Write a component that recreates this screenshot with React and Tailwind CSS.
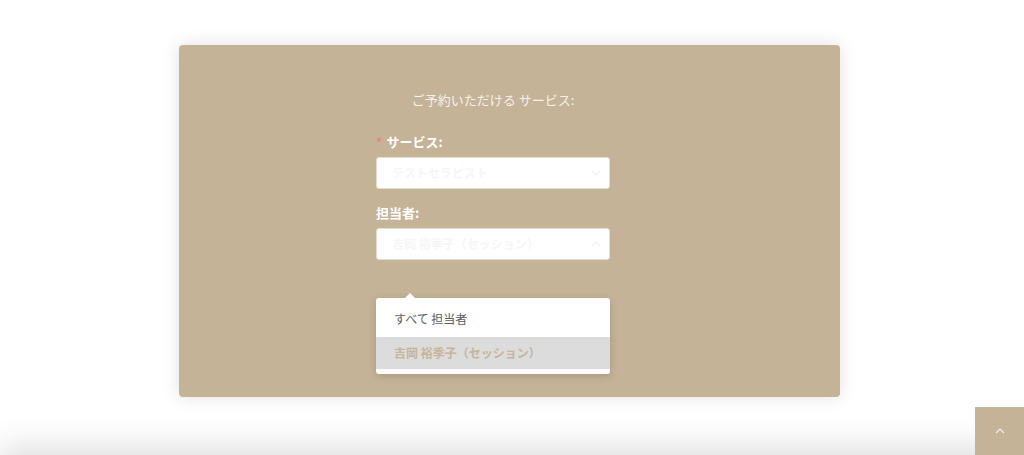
import React from "react";

const font = { fontFamily: '"Noto Sans CJK JP", "Noto Sans", sans-serif' };

function Chevron({ up }) {
  return (
    <svg width="10" height="6" viewBox="0 0 10 6" className="text-[#f0f0f0]">
      <path d={up ? "M1 5 L5 1 L9 5" : "M1 1 L5 5 L9 1"} fill="none" stroke="currentColor" strokeWidth="1.2" />
    </svg>
  );
}

export default function App() {
  return (
    <div className="relative w-[1024px] h-[455px] overflow-hidden bg-white" style={font}>
      <div className="pt-[45px] pl-[179px]">
        <div className="w-[661px] h-[352px] rounded-[4px] bg-[#c4b397] shadow-[0_0_18px_rgba(0,0,0,0.12)] pt-[45px] pl-[197px]">
          <div className="w-[234px]">
            <div className="text-center text-[13px] leading-[20px] text-[#f6f2ea]">ご予約いただける サービス:</div>
            <div className="mt-[23px] text-[13px] leading-[18px] font-bold text-white">
              <span className="text-[#e8838a] mr-[4px]">*</span>サービス:
            </div>
            <div className="mt-[6px] h-[32px] bg-white rounded-[3px] border border-[#e4ddcf] flex items-center justify-between pl-[15px] pr-[8px]">
              <span className="text-[12px] text-[#f6f6f6] font-bold">テストセラピスト</span>
              <Chevron />
            </div>
            <div className="mt-[15px] text-[13px] leading-[18px] font-bold text-white">担当者:</div>
            <div className="mt-[6px] h-[32px] bg-white rounded-[3px] border border-[#e4ddcf] flex items-center justify-between pl-[15px] pr-[8px]">
              <span className="text-[12px] text-[#f6f6f6] font-bold">吉岡 裕季子（セッション）</span>
              <Chevron up />
            </div>
            <div className="relative mt-[38px] bg-white rounded-[3px] shadow-[0_2px_8px_rgba(0,0,0,0.15)] pb-[5px]">
              <div className="absolute -top-[5px] left-[29px] w-0 h-0 border-l-[5px] border-r-[5px] border-b-[5px] border-l-transparent border-r-transparent border-b-white" />
              <div className="h-[39px] flex items-center pl-[18px] pt-[3px] text-[12px] text-[#5a5e66]">すべて 担当者</div>
              <div className="h-[32px] flex items-center pl-[18px] bg-[#dcdcdc] text-[12px] font-bold text-[#c6b597]">吉岡 裕季子（セッション）</div>
            </div>
          </div>
        </div>
      </div>
      <div className="absolute left-0 right-0 top-[455px] h-[40px] shadow-[0_-10px_30px_rgba(0,0,0,0.12)] bg-white" />
      <div className="absolute left-[975px] top-[407px] w-[49px] h-[48px] bg-[#c4b397] flex items-center justify-center">
        <svg width="10" height="6" viewBox="0 0 10 6">
          <path d="M1 5 L5 1 L9 5" fill="none" stroke="#f4efe6" strokeWidth="1.2" />
        </svg>
      </div>
    </div>
  );
}
